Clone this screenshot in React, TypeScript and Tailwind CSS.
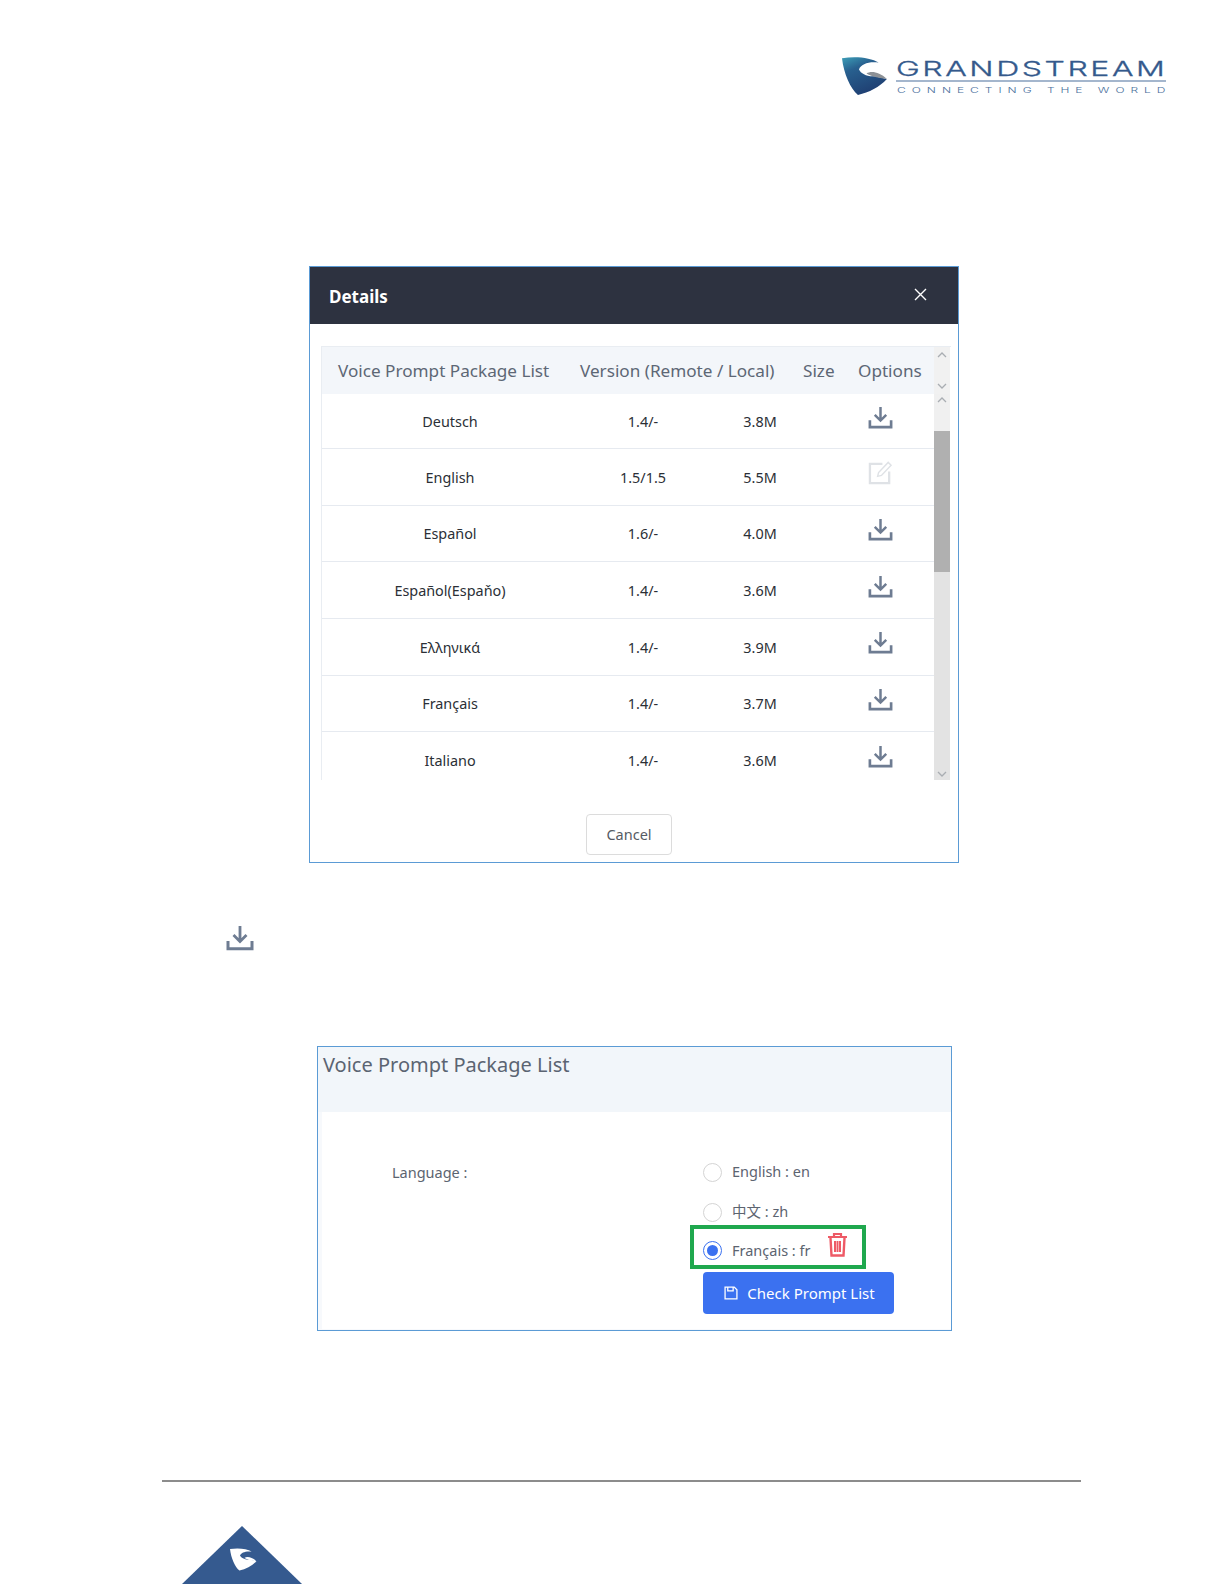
const sans = "font-['Noto_Sans','Noto_Sans_CJK_SC',sans-serif]";

const rows = [
  { name: "Deutsch", version: "1.4/-", size: "3.8M" },
  { name: "English", version: "1.5/1.5", size: "5.5M", installed: true },
  { name: "Español", version: "1.6/-", size: "4.0M" },
  { name: "Español(Espaňo)", version: "1.4/-", size: "3.6M" },
  { name: "Ελληνικά", version: "1.4/-", size: "3.9M" },
  { name: "Français", version: "1.4/-", size: "3.7M" },
  { name: "Italiano", version: "1.4/-", size: "3.6M" },
];

function DownloadIcon({ width = 25, height = 23 }: { width?: number; height?: number }) {
  return (
    <svg width={width} height={height} viewBox="0 0 28 26" fill="none" stroke="#6e7c92" strokeWidth="2.800">
      <path d="M14 1v15M7.500 10l6.500 6.500L20.500 10" />
      <path d="M2 16v7.800h24V16" strokeWidth="3" />
    </svg>
  );
}

function EditIcon() {
  return (
    <svg width="25" height="25" viewBox="0 0 26 26" fill="none" stroke="#dfe2e6" strokeWidth="2.400">
      <path d="M15 4H2v20h20V12" />
      <path d="M10 17l1-4L21 2.500l3 3L14 16z" strokeWidth="1.500" />
    </svg>
  );
}

function Chevron({ up }: { up?: boolean }) {
  return (
    <svg width="10" height="6" viewBox="0 0 10 6" fill="none" stroke="#a9adb2" strokeWidth="1.300">
      <path d={up ? "M1 5l4-4 4 4" : "M1 1l4 4 4-4"} />
    </svg>
  );
}

function Mark({ blue, grey }: { blue: string; grey: string }) {
  return (
    <>
      <path
        d="M0 5C40-2 85 3 108 18 80 14 55 22 50 38c5 12 25 22 45 20l37 8c-22 24-52 39-85 47C25 95 5 50 0 5z"
        fill={blue}
      />
      <path d="M72 50c13-9 38-5 60 16-20-3-42-5-60-16z" fill={grey} />
    </>
  );
}

function Logo() {
  return (
    <svg width="326" height="42" viewBox="0 0 326 42" className="block">
      <defs>
        <linearGradient id="markFill" x1="0" y1="0" x2="0.5" y2="1">
          <stop offset="0" stopColor="#3d9fb8" />
          <stop offset="0.35" stopColor="#28608f" />
          <stop offset="1" stopColor="#1f3f72" />
        </linearGradient>
      </defs>
      <g transform="translate(1 0.500) scale(0.34)">
        <Mark blue="url(#markFill)" grey="#8d9196" />
      </g>
      <text
        transform="translate(55 20) scale(1.6 1)"
        fontFamily="Inter, sans-serif"
        fontSize="20"
        fontWeight="300"
        fill="#34598c"
        stroke="#34598c"
        strokeWidth="0.300"
        textLength="168"
        lengthAdjust="spacing"
      >
        GRANDSTREAM
      </text>
      <rect x="55" y="24.500" width="270" height="1" fill="#4a6f9c" />
      <text
        transform="translate(56 37) scale(1.5 1)"
        fontFamily="Inter, sans-serif"
        fontSize="8"
        fontWeight="300"
        fill="#4a6f9c"
        textLength="179"
        lengthAdjust="spacing"
      >
        CONNECTING THE WORLD
      </text>
    </svg>
  );
}

function Radio({ checked }: { checked?: boolean }) {
  return (
    <span
      className={`flex size-[19px] shrink-0 items-center justify-center rounded-full border-[1.5px] ${
        checked ? "border-[#3b71f0]" : "border-[#d4d4d4]"
      }`}
    >
      {checked && <span className="size-[11px] rounded-full bg-[#3b71f0]" />}
    </span>
  );
}

export default function App() {
  return (
    <div className={`${sans} h-[1584px] w-[1224px] overflow-hidden bg-white`}>
      <div className="flex justify-end pr-[57px] pt-[56px]">
        <Logo />
      </div>

      <section className="ml-[309px] mt-[168px] h-[597px] w-[650px] border-[1.5px] border-[#5b9bd5]">
        <div className="flex h-[57px] items-center justify-between bg-[#2d3240] pl-[19px] pr-[31px] pt-[2px]">
          <span className="text-[17px] font-bold text-white">Details</span>
          <svg width="13" height="13" viewBox="0 0 13 13" stroke="#fff" strokeWidth="1.400" className="-mt-1">
            <path d="M1 1l11 11M12 1L1 12" />
          </svg>
        </div>

        <div className="ml-[11px] mr-[7px] mt-[22px] flex h-[434px] border-t border-l border-[#e9edf2]">
          <div className="w-[612px]">
            <div className="grid h-[47px] grid-cols-[242px_223px_55px_1fr] items-center bg-[#f3f6fa] pl-[16px] text-[17.150px] text-[#5d6775]">
              <span className="whitespace-nowrap">Voice Prompt Package List</span>
              <span className="whitespace-nowrap">Version (Remote / Local)</span>
              <span>Size</span>
              <span>Options</span>
            </div>
            <div className="h-[386px] overflow-hidden text-[14.400px] text-[#2b2f36]">
              {rows.map((row) => (
                <div
                  key={row.name}
                  className="grid h-[56.700px] grid-cols-[256px_130px_104px_1fr] items-center border-b-[1.500px] border-[#e6eaf0] pt-[1px] text-center first:h-[55px]"
                >
                  <span>{row.name}</span>
                  <span>{row.version}</span>
                  <span>{row.size}</span>
                  <span className="-mt-[9px] flex justify-center pl-[14px]">
                    {row.installed ? <EditIcon /> : <DownloadIcon />}
                  </span>
                </div>
              ))}
            </div>
          </div>

          <div className="flex w-[16px] flex-col">
            <div className="flex h-[47px] flex-col items-center justify-between bg-[#f1f1f1] py-[5px]">
              <Chevron up />
              <Chevron />
            </div>
            <div className="flex h-[386px] flex-col bg-[#e3e3e3]">
              <div className="flex h-[37px] justify-center bg-[#f0f0f0] pt-[3px]">
                <Chevron up />
              </div>
              <div className="h-[141px] bg-[#b0b0b0]" />
              <div className="flex flex-1 items-end justify-center pb-[3px]">
                <Chevron />
              </div>
            </div>
          </div>
        </div>

        <div className="ml-[276px] mt-[34px] flex h-[41px] w-[86px] items-center justify-center rounded-[4px] border-[1.5px] border-[#dcdcdc] pt-[1px] text-[14.500px] text-[#555b64]">
          Cancel
        </div>
      </section>

      <div className="ml-[226px] mt-[62px]">
        <DownloadIcon width={28} height={26} />
      </div>

      <section className="ml-[317px] mt-[95px] h-[285px] w-[635px] border-[1.5px] border-[#5b9bd5] bg-[#f7f9fc]">
        <div className="h-[65px] bg-[#f2f6fa] pl-[5px] pt-[3px] text-[20px] text-[#5b6472]">
          Voice Prompt Package List
        </div>
        <div className="ml-[4px] flex h-[217px] bg-white pl-[70px] pt-[47px] text-[14.500px] text-[#5c6470]">
          <div className="w-[311px] pt-[3px]">Language :</div>
          <div className="flex flex-col">
            <div className="flex h-[26px] items-center gap-[10px]">
              <Radio />
              <span>English : en</span>
            </div>
            <div className="mt-[14px] flex h-[26px] items-center gap-[10px]">
              <Radio />
              <span>中文 : zh</span>
            </div>
            <div className="-ml-[13px] flex h-[44px] w-[176px] items-center border-[4px] border-[#1fa84e] pl-[9px] pt-[7px]">
              <Radio checked />
              <span className="ml-[10px]">Français : fr</span>
              <svg width="21" height="25" viewBox="0 0 21 25" fill="none" stroke="#ee5a66" className="-mt-[13px] ml-[16px]">
                <path d="M1 5h19M7 5V2h7v3" strokeWidth="2.200" />
                <path d="M3.500 6l1 17.500h12l1-17.500" strokeWidth="2.400" />
                <path d="M8 9v11M10.500 9v11M13 9v11" strokeWidth="2" />
              </svg>
            </div>
            <div className="mt-[3px] flex h-[42px] w-[191px] items-center justify-center gap-[9px] rounded-[4px] bg-[#3b71f0] pl-[2px] text-[15px] text-white">
              <svg width="14" height="14" viewBox="0 0 13 13" fill="none" stroke="#fff" strokeWidth="1.200">
                <path d="M1 1h8.500L12 3.500V12H1z" />
                <path d="M3.500 1v3.500h5V1" />
              </svg>
              <span>Check Prompt List</span>
            </div>
          </div>
        </div>
      </section>

      <div className="ml-[162px] mt-[149px] h-[2px] w-[919px] bg-[#8c8c8c]" />

      <div className="ml-[182px] mt-[44px]">
        <svg width="120" height="58" viewBox="0 0 120 58" className="block">
          <path d="M60 0l60 58H0z" fill="#355a8f" />
          <g transform="translate(48 22) scale(0.2)">
            <Mark blue="#fff" grey="#fff" />
          </g>
        </svg>
      </div>
    </div>
  );
}
